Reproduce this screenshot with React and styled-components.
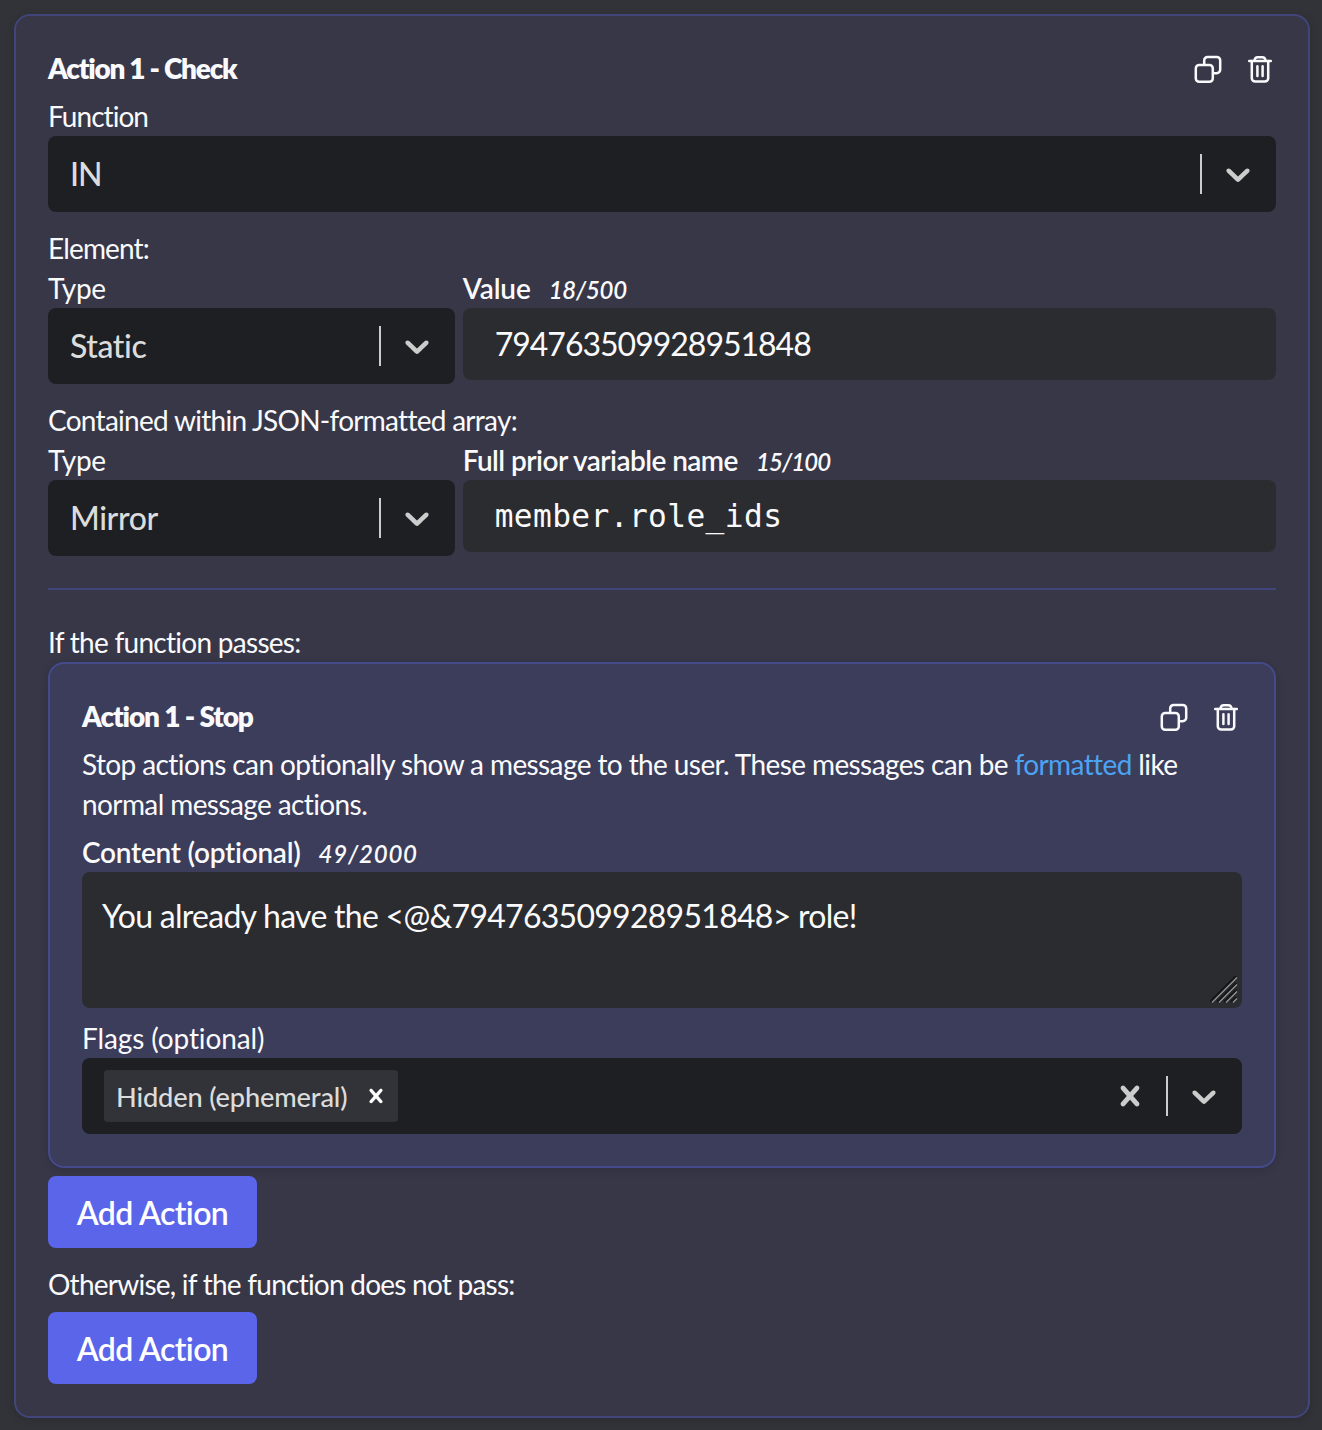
import React from 'react';
import styled, { createGlobalStyle } from 'styled-components';

const GlobalStyle = createGlobalStyle`
  *, *::before, *::after { box-sizing: border-box; }
  body {
    margin: 0;
    background: #323338;
    color: #fafafc;
    font-family: Lato, "Open Sans", sans-serif;
    font-size: 28px;
    line-height: 40px;
    font-variant-ligatures: none;
    -webkit-font-smoothing: antialiased;
  }
`;

const Page = styled.main`
  min-height: 1430px;
  padding: 14px 12px 12px 14px;
`;

const Card = styled.section`
  padding: 32px;
  border: 2px solid ${(p) => (p.$nested ? '#454a8b' : '#42457c')};
  border-radius: 16px;
  background: ${(p) => (p.$nested ? '#3b3d5b' : '#373748')};
  box-shadow: 0 2px 8px rgba(0, 0, 0, 0.14);
`;

const CardHeader = styled.header`
  display: flex;
  align-items: center;
  justify-content: space-between;
  height: 40px;
  margin-bottom: 8px;
`;

const Title = styled.h2`
  margin: 0;
  font-size: 28px;
  font-weight: 800;
  line-height: 38px;
  letter-spacing: ${(p) => p.$track || '-1.25px'};
`;

const Actions = styled.div`
  display: flex;
  gap: 20px;
  padding-top: 2px;
`;

const IconButton = styled.button`
  display: block;
  width: 32px;
  height: 32px;
  padding: 0;
  border: 0;
  background: none;
  color: inherit;

  svg { display: block; }
`;

const Text = styled.div`
  height: 40px;
  white-space: nowrap;
  letter-spacing: ${(p) => p.$track || '-0.72px'};
`;

const Label = styled(Text)`
  font-weight: ${(p) => (p.$strong ? 600 : 400)};
`;

const Counter = styled.em`
  margin-left: 18px;
  font-size: 24px;
  font-weight: 600;
  letter-spacing: ${(p) => p.$track || '-0.27px'};
`;

const Group = styled.div`
  margin-top: 16px;
`;

const Columns = styled.div`
  display: grid;
  grid-template-columns: minmax(0, 1fr) minmax(0, 2fr);
  column-gap: 8px;
`;

const Control = styled.div`
  display: flex;
  align-items: center;
  height: 76px;
  padding: 2px 2px 2px 22px;
  border-radius: 8px;
  background: #1e1f22;
`;

const Value = styled.span`
  flex: 1;
  color: #dcdcdc;
  font-size: 32px;
  font-weight: 500;
  letter-spacing: ${(p) => p.$track || '-0.4px'};
`;

const Indicator = styled.span`
  display: flex;
  padding: 16px;
  color: #cccccc;
`;

const Separator = styled.span`
  width: 2px;
  height: 40px;
  background: #cccccc;
`;

const Chips = styled.div`
  display: flex;
  flex: 1;
`;

const Chip = styled.span`
  display: flex;
  align-items: center;
  height: 52px;
  padding: 0 8px 0 12px;
  border-radius: 4px;
  background: #323338;
`;

const ChipText = styled.span`
  width: 246px;
  padding-top: 1px;
  color: #dcdcdc;
  font-size: 27.2px;
  font-weight: 500;
  white-space: nowrap;
  letter-spacing: -0.15px;
`;

const Input = styled.div`
  height: 72px;
  padding: 0 32px;
  border-radius: 8px;
  background: #2b2c2f;
  font-family: ${(p) => (p.$mono ? '"DejaVu Sans Mono", monospace' : 'inherit')};
  font-size: ${(p) => (p.$mono ? '31.2px' : '32px')};
  line-height: ${(p) => (p.$mono ? '72px' : '71px')};
  letter-spacing: ${(p) => (p.$mono ? '0.4px' : '-1px')};
`;

const Paragraph = styled.p`
  margin: 0 0 8px;
  letter-spacing: -0.6px;
`;

const Link = styled.a`
  color: #4ba3f3;
`;

const TextArea = styled.div`
  position: relative;
  height: 136px;
  margin-bottom: 10px;
  padding: 22px 20px;
  border-radius: 8px;
  background: #2b2c2f;
  font-size: 32px;
  line-height: 44px;
  white-space: nowrap;
  letter-spacing: -0.72px;
`;

const Grip = styled.svg`
  position: absolute;
  right: 4px;
  bottom: 4px;
`;

const Divider = styled.hr`
  height: 2px;
  margin: 32px 0;
  border: 0;
  background: #42457c;
`;

const AddButton = styled.button`
  display: block;
  width: 209px;
  height: 72px;
  margin-top: 8px;
  padding: 1px 0 0;
  border: 0;
  border-radius: 8px;
  background: #5b65ea;
  color: #fff;
  font: 600 32px Lato, sans-serif;
  letter-spacing: -0.6px;
`;

function CopyIcon() {
  return (
    <svg width="32" height="32" viewBox="0 0 32 32" fill="none" stroke="currentColor" strokeWidth="2.5">
      <rect x="3.8" y="12" width="17" height="16.8" rx="3.4" />
      <path d="M12.2 12V7.4A3.4 3.4 0 0 1 15.6 4H24.8a3.4 3.4 0 0 1 3.4 3.4v9.4a3.4 3.4 0 0 1-3.4 3.4h-4" />
    </svg>
  );
}

function TrashIcon() {
  return (
    <svg width="32" height="32" viewBox="0 0 32 32" fill="none" stroke="currentColor" strokeWidth="2.5" strokeLinecap="round">
      <path d="M5.2 8h21.6" />
      <path d="M10.4 7.4C10.8 5.2 11.6 4.2 13.6 4.2h4.8c2 0 2.8 1 3.2 3.2" />
      <path d="M7.8 8v17.2a3.4 3.4 0 0 0 3.4 3.4h9.6a3.4 3.4 0 0 0 3.4-3.4V8" />
      <path d="M13.4 13.2v9.8M18.6 13.2v9.8" />
    </svg>
  );
}

function Chevron() {
  return (
    <svg width="40" height="40" viewBox="0 0 20 20" fill="currentColor">
      <path d="M4.516 7.548c0.436-0.446 1.043-0.481 1.576 0l3.908 3.747 3.908-3.747c0.533-0.481 1.141-0.446 1.574 0 0.436 0.445 0.408 1.197 0 1.615-0.406 0.418-4.695 4.502-4.695 4.502-0.217 0.223-0.502 0.335-0.787 0.335s-0.57-0.112-0.789-0.335c0 0-4.287-4.084-4.695-4.502s-0.436-1.17 0-1.615z" />
    </svg>
  );
}

function Cross({ size = 40, color = 'currentColor' }) {
  return (
    <svg width={size} height={size} viewBox="0 0 20 20" fill={color}>
      <path d="M14.348 14.849c-0.469 0.469-1.229 0.469-1.697 0l-2.651-3.030-2.651 3.029c-0.469 0.469-1.229 0.469-1.697 0-0.469-0.469-0.469-1.229 0-1.697l2.758-3.15-2.759-3.152c-0.469-0.469-0.469-1.228 0-1.697s1.228-0.469 1.697 0l2.652 3.031 2.651-3.031c0.469-0.469 1.228-0.469 1.697 0s0.469 1.229 0 1.697l-2.758 3.152 2.758 3.15c0.469 0.469 0.469 1.229 0 1.698z" />
    </svg>
  );
}

function Select({ value, track }) {
  return (
    <Control>
      <Value $track={track}>{value}</Value>
      <Separator />
      <Indicator><Chevron /></Indicator>
    </Control>
  );
}

function Header({ title, track }) {
  return (
    <CardHeader>
      <Title $track={track}>{title}</Title>
      <Actions>
        <IconButton aria-label="Duplicate"><CopyIcon /></IconButton>
        <IconButton aria-label="Delete"><TrashIcon /></IconButton>
      </Actions>
    </CardHeader>
  );
}

export default function App() {
  return (
    <>
      <GlobalStyle />
      <Page>
        <Card>
          <Header title="Action 1 - Check" />
          <Label $track="-0.95px">Function</Label>
          <Select value="IN" track="-1px" />
          <Group>
            <Text $track="-0.85px">Element:</Text>
            <Columns>
              <div>
                <Label $track="-0.3px">Type</Label>
                <Select value="Static" />
              </div>
              <div>
                <Label $strong $track="-0.1px">
                  Value<Counter>18/500</Counter>
                </Label>
                <Input>794763509928951848</Input>
              </div>
            </Columns>
          </Group>
          <Group>
            <Text>Contained within JSON-formatted array:</Text>
            <Columns>
              <div>
                <Label $track="-0.3px">Type</Label>
                <Select value="Mirror" />
              </div>
              <div>
                <Label $strong $track="-0.54px">
                  Full prior variable name<Counter $track="-0.9px">15/100</Counter>
                </Label>
                <Input $mono>member.role_ids</Input>
              </div>
            </Columns>
          </Group>
          <Divider />
          <Text>If the function passes:</Text>
          <Card $nested>
            <Header title="Action 1 - Stop" track="-1.12px" />
            <Paragraph>
              Stop actions can optionally show a message to the user. These messages can be{' '}
              <Link>formatted</Link> like normal message actions.
            </Paragraph>
            <Label $strong $track="-0.26px">
              Content (optional)<Counter $track="0.8px">49/2000</Counter>
            </Label>
            <TextArea>
              {'You already have the <@&794763509928951848> role!'}
              <Grip width="28" height="28" viewBox="0 0 28 28" fill="none">
                <path d="M0 26L26 0M7 26L26 7M14 26L26 14M21 26L26 21" stroke="#17181a" strokeWidth="2.4" />
                <path d="M2 26.5L27 1.5M9 26.5L27 8.5M16 26.5L27 15.5M23 26.5L27 22.5" stroke="#98989a" strokeWidth="1.1" />
              </Grip>
            </TextArea>
            <Label $track="-0.12px">Flags (optional)</Label>
            <Control>
              <Chips>
                <Chip>
                  <ChipText>Hidden (ephemeral)</ChipText>
                  <Cross size={28} color="#ffffff" />
                </Chip>
              </Chips>
              <Indicator><Cross /></Indicator>
              <Separator />
              <Indicator><Chevron /></Indicator>
            </Control>
          </Card>
          <AddButton>Add Action</AddButton>
          <Group>
            <Text $track="-0.76px">Otherwise, if the function does not pass:</Text>
            <AddButton>Add Action</AddButton>
          </Group>
        </Card>
      </Page>
    </>
  );
}
